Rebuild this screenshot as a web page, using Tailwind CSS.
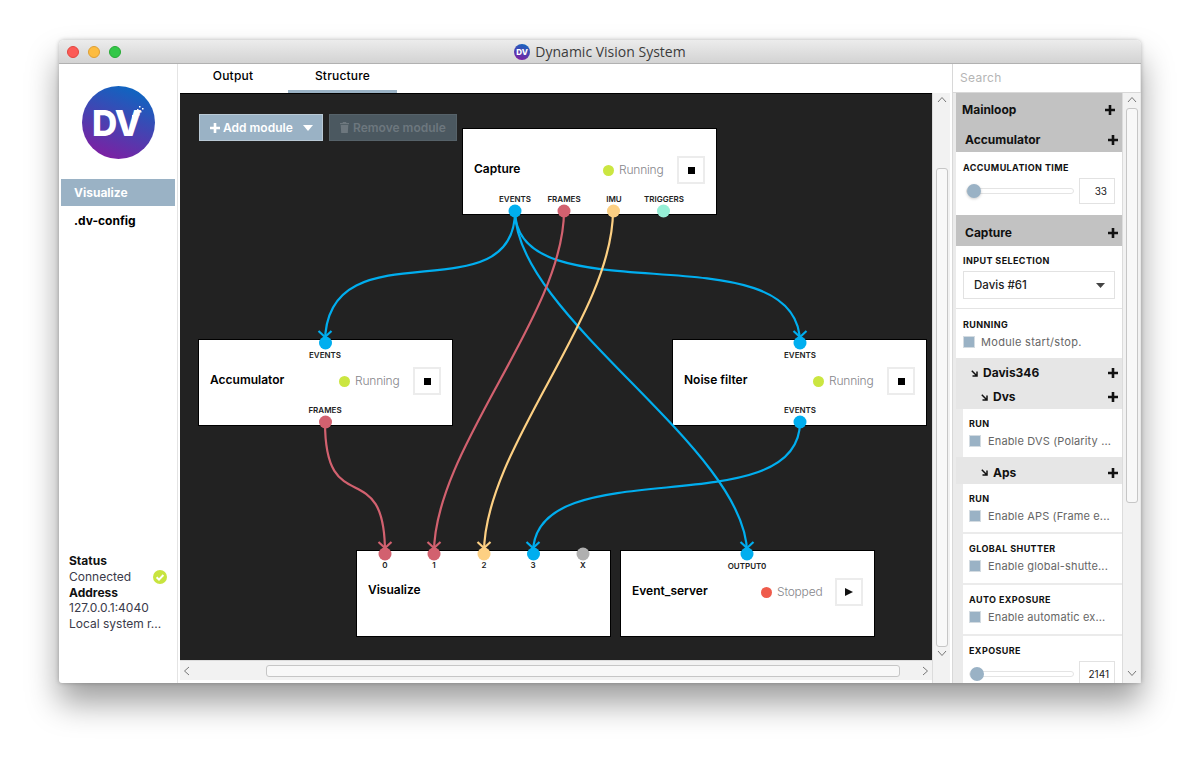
<!DOCTYPE html>
<html lang="en">
  <head>
    <meta charset="UTF-8" />
    <meta name="viewport" content="width=device-width, initial-scale=1.0" />
    <title>Dynamic Vision System</title>
    <script src="https://cdn.jsdelivr.net/npm/@tailwindcss/browser@4"></script>
  </head>
  <body class="bg-white">
    <div class="w-[1200px] h-[761px] overflow-hidden pt-[40px] pl-[59px] font-[Inter,sans-serif] text-black">
      <div class="w-[1082px] h-[643px] flex flex-col rounded-t-[5px] rounded-b-[3px] bg-white shadow-[0_20px_32px_rgba(0,0,0,0.38),0_0_4px_rgba(0,0,0,0.25)]">
        <!-- title bar -->
        <div class="relative h-[24px] shrink-0 flex items-center justify-center gap-[5px] rounded-t-[5px] bg-gradient-to-b from-[#ececec] to-[#d3d3d3] border-b border-[#b1b1b1]">
          <div class="absolute left-[8px] top-[6px] flex gap-[9px]">
            <span class="w-[12px] h-[12px] rounded-full bg-[#fc5b57] border border-[#e2463f]"></span>
            <span class="w-[12px] h-[12px] rounded-full bg-[#fdbc40] border border-[#de9f34]"></span>
            <span class="w-[12px] h-[12px] rounded-full bg-[#33c748] border border-[#27aa35]"></span>
          </div>
          <svg width="16" height="16" viewBox="0 0 16 16">
            <defs>
              <linearGradient id="tlogo" x1="0.7" y1="0" x2="0.35" y2="1">
                <stop offset="0" stop-color="#1467c0" />
                <stop offset="1" stop-color="#7d1fa3" />
              </linearGradient>
            </defs>
            <circle cx="8" cy="8" r="8" fill="url(#tlogo)" />
            <text x="8" y="11" text-anchor="middle" font-size="8" font-weight="800" fill="#fff" font-family="Inter">DV</text>
          </svg>
          <span class="text-[14px] text-[#3c3c3c] font-[Open_Sans,sans-serif]">Dynamic Vision System</span>
        </div>

        <div class="flex-1 flex min-h-0">
          <!-- sidebar -->
          <div class="w-[119px] shrink-0 flex flex-col border-r border-[#e4e4e4] text-[12px] pl-[2px]">
            <svg class="ml-[21px] mt-[22px] shrink-0" width="73" height="73" viewBox="0 0 73 73">
              <defs>
                <linearGradient id="logo" x1="0.72" y1="0" x2="0.32" y2="1">
                  <stop offset="0" stop-color="#0a68c2" />
                  <stop offset="1" stop-color="#7e1fa2" />
                </linearGradient>
              </defs>
              <circle cx="36.5" cy="36.5" r="36.5" fill="url(#logo)" />
              <text x="10" y="50" font-size="35" font-weight="800" fill="#fff" font-family="Inter" letter-spacing="-1">DV</text>
              <g fill="#fff">
                <rect x="57" y="20" width="1.500" height="1.500" /><rect x="60" y="22" width="1.500" height="1.500" /><rect x="55" y="23" width="1.500" height="1.500" />
                <rect x="58" y="25" width="1.500" height="1.500" /><rect x="53" y="26" width="2" height="2" /><rect x="56" y="28" width="1.500" height="1.500" />
                <rect x="50" y="29" width="3" height="3" /><rect x="54" y="31" width="1.500" height="1.500" />
              </g>
            </svg>
            <div class="mt-[20px] h-[27px] w-[114px] flex items-center pl-[13px] bg-[#9ab2c5] text-white font-bold">Visualize</div>
            <div class="mt-[7px] h-[15px] flex items-center pl-[13px] font-bold">.dv-config</div>
            <div class="mt-auto mb-[51px] pl-[8px] pr-[7px] leading-[15.8px] text-[#3a3a4a]">
              <div class="font-bold text-[#111]">Status</div>
              <div class="flex items-center justify-between pr-[3px]">
                <span>Connected</span>
                <svg width="14" height="14" viewBox="0 0 14 14"><circle cx="7" cy="7" r="7" fill="#c8e43f" /><path d="M3.6 7.2l2.4 2.4 4.4-4.6" fill="none" stroke="#fff" stroke-width="2" /></svg>
              </div>
              <div class="font-bold text-[#111]">Address</div>
              <div>127.0.0.1:4040</div>
              <div class="whitespace-nowrap">Local system r...</div>
            </div>
          </div>

          <!-- center -->
          <div class="w-[774px] shrink-0 flex flex-col">
            <div class="h-[29px] shrink-0 flex text-[12px] font-medium tracking-[0.2px]">
              <div class="w-[110px] h-full flex justify-center pt-[3px]">Output</div>
              <div class="w-[109px] h-full flex justify-center pt-[3px] border-b-[3px] border-[#9ab2c5]">Structure</div>
            </div>
            <div class="flex-1 flex min-h-0 pl-[2px]">
              <div class="w-[752px] flex flex-col">
                <!-- canvas -->
                <div class="relative h-[567px] shrink-0 bg-[#222222] overflow-hidden border-t border-black">
                  <div class="absolute left-[19px] top-[20px] w-[124px] h-[27px] flex items-center pl-[10px] gap-[3px] bg-[#9ab2c5] border border-[#b9c9d5] text-white text-[12px] font-semibold">
                    <svg width="10" height="10" viewBox="0 0 10 10"><path d="M3.7 0h2.600v3.700H10v2.600H6.300V10H3.700V6.300H0V3.700h3.700z" fill="#fff" /></svg>
                    <span>Add module</span>
                    <svg class="ml-[7px]" width="10" height="6" viewBox="0 0 10 6"><path d="M0 0h10L5 6z" fill="#fff" /></svg>
                  </div>
                  <div class="absolute left-[149px] top-[20px] w-[128px] h-[27px] flex items-center pl-[10px] gap-[4px] bg-[#4b5860] border border-[#566269] text-[#6d777e] text-[12px] font-semibold">
                    <svg width="9" height="11" viewBox="0 0 9 11"><path d="M3 0h3l.5 1H9v1.200H0V1h2.500zM.7 3h7.600l-.5 8H1.200z" fill="#6d777e" /></svg>
                    <span>Remove module</span>
                  </div>

                  <!-- Capture -->
                  <div class="absolute left-[282px] top-[34px] w-[255px] h-[87px] bg-white border border-black px-[11px] pt-[27px]">
                    <div class="flex items-center h-[28px]">
                      <span class="text-[12px] font-semibold flex-1 pb-[2px]">Capture</span>
                      <span class="w-[11px] h-[11px] rounded-full bg-[#cbe641]"></span>
                      <span class="ml-[5px] w-[58px] text-[12px] font-light tracking-[-0.2px] text-[#85858a]">Running</span>
                      <span class="w-[28px] h-[28px] flex items-center justify-center border-2 border-[#ececec] bg-white"><span class="w-[7px] h-[7px] bg-black"></span></span>
                    </div>
                    <span class="absolute left-[52px] top-[64px] -translate-x-1/2 text-[8px] font-semibold text-[#222]">EVENTS</span>
                    <span class="absolute left-[101px] top-[64px] -translate-x-1/2 text-[8px] font-semibold text-[#222]">FRAMES</span>
                    <span class="absolute left-[151px] top-[64px] -translate-x-1/2 text-[8px] font-semibold text-[#222]">IMU</span>
                    <span class="absolute left-[201px] top-[64px] -translate-x-1/2 text-[8px] font-semibold text-[#222] whitespace-nowrap">TRIGGERS</span>
                  </div>

                  <!-- Accumulator -->
                  <div class="absolute left-[18px] top-[245px] w-[255px] h-[87px] bg-white border border-black px-[11px] pt-[27px]">
                    <div class="flex items-center h-[28px]">
                      <span class="text-[12px] font-semibold flex-1 pb-[2px]">Accumulator</span>
                      <span class="w-[11px] h-[11px] rounded-full bg-[#cbe641]"></span>
                      <span class="ml-[5px] w-[58px] text-[12px] font-light tracking-[-0.2px] text-[#85858a]">Running</span>
                      <span class="w-[28px] h-[28px] flex items-center justify-center border-2 border-[#ececec] bg-white"><span class="w-[7px] h-[7px] bg-black"></span></span>
                    </div>
                    <span class="absolute left-[126px] top-[9px] -translate-x-1/2 text-[8px] font-semibold text-[#222]">EVENTS</span>
                    <span class="absolute left-[126px] top-[64px] -translate-x-1/2 text-[8px] font-semibold text-[#222]">FRAMES</span>
                  </div>

                  <!-- Noise filter -->
                  <div class="absolute left-[492px] top-[245px] w-[255px] h-[87px] bg-white border border-black px-[11px] pt-[27px]">
                    <div class="flex items-center h-[28px]">
                      <span class="text-[12px] font-semibold flex-1 pb-[2px]">Noise filter</span>
                      <span class="w-[11px] h-[11px] rounded-full bg-[#cbe641]"></span>
                      <span class="ml-[5px] w-[58px] text-[12px] font-light tracking-[-0.2px] text-[#85858a]">Running</span>
                      <span class="w-[28px] h-[28px] flex items-center justify-center border-2 border-[#ececec] bg-white"><span class="w-[7px] h-[7px] bg-black"></span></span>
                    </div>
                    <span class="absolute left-[127px] top-[9px] -translate-x-1/2 text-[8px] font-semibold text-[#222]">EVENTS</span>
                    <span class="absolute left-[127px] top-[64px] -translate-x-1/2 text-[8px] font-semibold text-[#222]">EVENTS</span>
                  </div>

                  <!-- Visualize -->
                  <div class="absolute left-[176px] top-[456px] w-[255px] h-[87px] bg-white border border-black px-[11px] pt-[27px]">
                    <div class="flex items-center h-[24px]">
                      <span class="text-[12px] font-semibold flex-1">Visualize</span>
                    </div>
                    <span class="absolute left-[28px] top-[8px] -translate-x-1/2 text-[8px] font-semibold text-[#222]">0</span>
                    <span class="absolute left-[77px] top-[8px] -translate-x-1/2 text-[8px] font-semibold text-[#222]">1</span>
                    <span class="absolute left-[127px] top-[8px] -translate-x-1/2 text-[8px] font-semibold text-[#222]">2</span>
                    <span class="absolute left-[176px] top-[8px] -translate-x-1/2 text-[8px] font-semibold text-[#222]">3</span>
                    <span class="absolute left-[226px] top-[8px] -translate-x-1/2 text-[8px] font-semibold text-[#222]">X</span>
                  </div>

                  <!-- Event_server -->
                  <div class="absolute left-[440px] top-[456px] w-[255px] h-[87px] bg-white border border-black px-[11px] pt-[27px]">
                    <div class="flex items-center h-[28px]">
                      <span class="text-[12px] font-semibold flex-1 pb-[2px]">Event_server</span>
                      <span class="w-[11px] h-[11px] rounded-full bg-[#ef5b4b]"></span>
                      <span class="ml-[5px] w-[58px] text-[12px] font-light tracking-[-0.2px] text-[#85858a]">Stopped</span>
                      <span class="w-[28px] h-[28px] flex items-center justify-center border-2 border-[#ececec] bg-white">
                        <svg width="8" height="8" viewBox="0 0 8 8"><path d="M0 0l8 4-8 4z" fill="#111" /></svg>
                      </span>
                    </div>
                    <span class="absolute left-[126px] top-[9px] -translate-x-1/2 text-[8px] font-semibold text-[#222]">OUTPUT0</span>
                  </div>

                  <!-- connections, in window coordinates -->
                  <svg class="absolute left-0 top-0" width="752" height="566" viewBox="180 94 752 566" fill="none" stroke-width="2.200">
                    <g stroke="#00aeef">
                      <path d="M515 211C515 318 325 222 325 343" />
                      <path d="M515 211C515 319 800 227 800 343" />
                      <path d="M515 211C515 316 747 448 747 553" />
                      <path d="M800 422C800 527 533 448 533 553" />
                      <path d="M318.500 331L325 337L331.500 331M740.500 542L747 548L753.500 542M526.500 542L533 548L539.500 542M793.500 331L800 337L806.500 331" />
                    </g>
                    <g stroke="#d2616f">
                      <path d="M564 211C564 315 434 449 434 553" />
                      <path d="M325 422C325 523 385 452 385 553" />
                      <path d="M378.500 542L385 548L391.500 542M427.500 542L434 548L440.500 542" />
                    </g>
                    <g stroke="#fdd083">
                      <path d="M613 211C613 315 484 449 484 553" />
                      <path d="M477.500 542L484 548L490.500 542" />
                    </g>
                    <g stroke="none">
                      <circle cx="515" cy="211" r="6.500" fill="#00aeef" />
                      <circle cx="564" cy="211" r="6.500" fill="#d2616f" />
                      <circle cx="613.500" cy="211" r="6.500" fill="#fdd083" />
                      <circle cx="663.500" cy="211" r="6.500" fill="#96efd6" />
                      <circle cx="325.500" cy="343" r="6.500" fill="#00aeef" />
                      <circle cx="325.500" cy="422" r="6.500" fill="#d2616f" />
                      <circle cx="800" cy="343" r="6.500" fill="#00aeef" />
                      <circle cx="800" cy="422" r="6.500" fill="#00aeef" />
                      <circle cx="385" cy="554" r="6.500" fill="#d2616f" />
                      <circle cx="434" cy="554" r="6.500" fill="#d2616f" />
                      <circle cx="484" cy="554" r="6.500" fill="#fdd083" />
                      <circle cx="533.500" cy="554" r="6.500" fill="#00aeef" />
                      <circle cx="583" cy="554" r="6.500" fill="#b0b0b0" />
                      <circle cx="747" cy="554" r="6.500" fill="#00aeef" />
                    </g>
                  </svg>
                </div>
                <!-- horizontal scrollbar -->
                <div class="h-[20px] flex items-center bg-[#f2f2f2] border-t border-[#dcdcdc]">
                  <svg class="ml-[3px]" width="7" height="10" viewBox="0 0 7 10"><path d="M6 1L1.500 5L6 9" fill="none" stroke="#777" /></svg>
                  <div class="ml-[76px] w-[634px] h-[12px] rounded-[3px] bg-[#f8f8f8] border border-[#c6c6c6]"></div>
                  <svg class="ml-[22px]" width="7" height="10" viewBox="0 0 7 10"><path d="M1 1L5.500 5L1 9" fill="none" stroke="#777" /></svg>
                </div>
              </div>
              <!-- vertical scrollbar -->
              <div class="w-[18px] flex flex-col items-center bg-[#f2f2f2] border-l border-[#dcdcdc]">
                <svg class="mt-[3px]" width="10" height="7" viewBox="0 0 10 7"><path d="M1 6L5 1.500L9 6" fill="none" stroke="#777" /></svg>
                <div class="mt-[65px] w-[12px] h-[479px] rounded-[3px] bg-[#f8f8f8] border border-[#c6c6c6]"></div>
                <svg class="mt-[3px]" width="10" height="7" viewBox="0 0 10 7"><path d="M1 1L5 5.500L9 1" fill="none" stroke="#777" /></svg>
              </div>
            </div>
          </div>

          <!-- right panel -->
          <div class="flex-1 flex flex-col min-w-0 bg-[#e9e9e9] border-l border-[#d8d8d8]">
            <div class="h-[28px] shrink-0 flex items-center pl-[7px] mr-[1px] bg-white text-[12px] text-[#b5b5b5] tracking-[0.3px]">Search</div>
            <div class="flex-1 flex min-h-0 border-t border-[#d8d8d8]">
              <div class="w-[169px] shrink-0 overflow-hidden pl-[3px] bg-[#ebebeb]">
                <div class="bg-[#c2c2c2] text-[12px] font-bold text-[#111]">
                  <div class="h-[30px] pt-[4px] flex items-center justify-between pl-[6px] pr-[7px]">
                    <span>Mainloop</span>
                    <svg width="10" height="10" viewBox="0 0 10 10"><path d="M3.700 0h2.600v3.700H10v2.600H6.300V10H3.700V6.300H0V3.700h3.700z" fill="#111" /></svg>
                  </div>
                  <div class="h-[29px] pt-[5px] flex items-center justify-between pl-[9px] pr-[4px]">
                    <span>Accumulator</span>
                    <svg width="10" height="10" viewBox="0 0 10 10"><path d="M3.700 0h2.600v3.700H10v2.600H6.300V10H3.700V6.300H0V3.700h3.700z" fill="#111" /></svg>
                  </div>
                </div>
                <div class="h-[63px] bg-white px-[7px] pt-[10px]">
                  <div class="text-[9px] font-bold leading-[12px] tracking-[0.4px] text-[#111]">ACCUMULATION TIME</div>
                  <div class="flex items-center mt-[4px]">
                    <div class="relative flex-1 h-[6px] ml-[3px] mr-[5px] rounded-full border border-[#e4e4e4] bg-white">
                      <span class="absolute left-0 -top-[5px] w-[14px] h-[14px] rounded-full bg-[#9ab2c5] shadow-[0_1px_3px_rgba(0,0,0,0.2)]"></span>
                    </div>
                    <div class="w-[36px] h-[26px] flex items-center justify-end pr-[7px] border border-[#e2e2e2] text-[10px] text-[#222]">33</div>
                  </div>
                </div>
                <div class="bg-[#c2c2c2] h-[31px] pt-[5px] flex items-center justify-between pl-[9px] pr-[4px] text-[12px] font-bold text-[#111]">
                  <span>Capture</span>
                  <svg width="10" height="10" viewBox="0 0 10 10"><path d="M3.700 0h2.600v3.700H10v2.600H6.300V10H3.700V6.300H0V3.700h3.700z" fill="#111" /></svg>
                </div>
                <div class="h-[63px] bg-white px-[7px] pt-[9px] border-b border-[#e4e4e4]">
                  <div class="text-[9px] font-bold leading-[12px] tracking-[0.4px] text-[#111]">INPUT SELECTION</div>
                  <div class="mt-[4px] h-[28px] flex items-center justify-between pl-[10px] pr-[9px] pt-[1px] border border-[#e2e2e2] text-[11.500px] font-medium text-[#222]">
                    <span>Davis #61</span>
                    <svg width="9" height="5" viewBox="0 0 9 5"><path d="M0 0h9L4.500 5z" fill="#444" /></svg>
                  </div>
                </div>
                <div class="h-[49px] bg-white px-[7px] pt-[10px]">
                  <div class="text-[9px] font-bold leading-[12px] tracking-[0.4px] text-[#111]">RUNNING</div>
                  <div class="flex items-center gap-[6px] mt-[3px] text-[11px] tracking-[0.3px] text-[#666]">
                    <span class="w-[12px] h-[12px] bg-[#9ab2c5] border border-[#d3dbe1]"></span>
                    <span class="whitespace-nowrap">Module start/stop.</span>
                  </div>
                </div>
                <div class="h-[25px] pt-[5px] flex items-center justify-between pl-[15px] pr-[4px] bg-[#e6e6e6] text-[12px] font-bold text-[#111]">
                  <span class="flex items-center gap-[5px]">
                    <svg width="7" height="7" viewBox="0 0 7 7"><path d="M0.800 0.800L5.500 5.500M6 1.500V6H1.500" fill="none" stroke="#111" stroke-width="1.500" /></svg>
                    Davis346
                  </span>
                  <svg width="10" height="10" viewBox="0 0 10 10"><path d="M3.700 0h2.600v3.700H10v2.600H6.300V10H3.700V6.300H0V3.700h3.700z" fill="#111" /></svg>
                </div>
                <div class="h-[26px] pt-[2px] flex items-center justify-between pl-[25px] pr-[4px] bg-[#e6e6e6] text-[12px] font-bold text-[#111]">
                  <span class="flex items-center gap-[5px]">
                    <svg width="7" height="7" viewBox="0 0 7 7"><path d="M0.800 0.800L5.500 5.500M6 1.500V6H1.500" fill="none" stroke="#111" stroke-width="1.500" /></svg>
                    Dvs
                  </span>
                  <svg width="10" height="10" viewBox="0 0 10 10"><path d="M3.700 0h2.600v3.700H10v2.600H6.300V10H3.700V6.300H0V3.700h3.700z" fill="#111" /></svg>
                </div>
                <div class="ml-[7px] h-[48px] bg-white pl-[6px] pr-[4px] pt-[9px]">
                  <div class="text-[9px] font-bold leading-[12px] tracking-[0.4px] text-[#111]">RUN</div>
                  <div class="flex items-center gap-[7px] mt-[3px] text-[11px] tracking-[0.15px] text-[#666]">
                    <span class="w-[12px] h-[12px] bg-[#9ab2c5] border border-[#d3dbe1]"></span>
                    <span class="whitespace-nowrap">Enable DVS (Polarity ...</span>
                  </div>
                </div>
                <div class="h-[27px] pt-[4px] flex items-center justify-between pl-[25px] pr-[4px] bg-[#e6e6e6] text-[12px] font-bold text-[#111]">
                  <span class="flex items-center gap-[5px]">
                    <svg width="7" height="7" viewBox="0 0 7 7"><path d="M0.800 0.800L5.500 5.500M6 1.500V6H1.500" fill="none" stroke="#111" stroke-width="1.500" /></svg>
                    Aps
                  </span>
                  <svg width="10" height="10" viewBox="0 0 10 10"><path d="M3.700 0h2.600v3.700H10v2.600H6.300V10H3.700V6.300H0V3.700h3.700z" fill="#111" /></svg>
                </div>
                <div class="ml-[7px] flex flex-col gap-[2px]">
                  <div class="h-[48px] bg-white pl-[6px] pr-[4px] pt-[9px]">
                    <div class="text-[9px] font-bold leading-[12px] tracking-[0.4px] text-[#111]">RUN</div>
                    <div class="flex items-center gap-[7px] mt-[3px] text-[11px] tracking-[0.15px] text-[#666]">
                      <span class="w-[12px] h-[12px] bg-[#9ab2c5] border border-[#d3dbe1]"></span>
                      <span class="whitespace-nowrap">Enable APS (Frame e...</span>
                    </div>
                  </div>
                  <div class="h-[49px] bg-white pl-[6px] pr-[4px] pt-[9px]">
                    <div class="text-[9px] font-bold leading-[12px] tracking-[0.4px] text-[#111]">GLOBAL SHUTTER</div>
                    <div class="flex items-center gap-[7px] mt-[3px] text-[11px] tracking-[0.15px] text-[#666]">
                      <span class="w-[12px] h-[12px] bg-[#9ab2c5] border border-[#d3dbe1]"></span>
                      <span class="whitespace-nowrap">Enable global-shutte...</span>
                    </div>
                  </div>
                  <div class="h-[49px] bg-white pl-[6px] pr-[4px] pt-[9px]">
                    <div class="text-[9px] font-bold leading-[12px] tracking-[0.4px] text-[#111]">AUTO EXPOSURE</div>
                    <div class="flex items-center gap-[7px] mt-[3px] text-[11px] tracking-[0.15px] text-[#666]">
                      <span class="w-[12px] h-[12px] bg-[#9ab2c5] border border-[#d3dbe1]"></span>
                      <span class="whitespace-nowrap">Enable automatic ex...</span>
                    </div>
                  </div>
                  <div class="h-[60px] bg-white pl-[6px] pr-[7px] pt-[9px]">
                    <div class="text-[9px] font-bold leading-[12px] tracking-[0.4px] text-[#111]">EXPOSURE</div>
                    <div class="flex items-center mt-[4px]">
                      <div class="relative flex-1 h-[6px] mr-[5px] rounded-full border border-[#e4e4e4] bg-white">
                        <span class="absolute left-0 -top-[5px] w-[14px] h-[14px] rounded-full bg-[#9ab2c5]"></span>
                      </div>
                      <div class="w-[36px] h-[26px] flex items-center justify-end pr-[5px] border border-[#e2e2e2] text-[10px] text-[#222]">2141</div>
                    </div>
                  </div>
                </div>
              </div>
              <!-- panel scrollbar -->
              <div class="w-[18px] flex flex-col items-center bg-[#f2f2f2] border-l border-[#dcdcdc]">
                <svg class="mt-[3px]" width="10" height="7" viewBox="0 0 10 7"><path d="M1 6L5 1.500L9 6" fill="none" stroke="#777" /></svg>
                <div class="mt-[5px] w-[12px] h-[395px] rounded-[3px] bg-[#f8f8f8] border border-[#c6c6c6]"></div>
                <svg class="mt-auto mb-[6px]" width="10" height="7" viewBox="0 0 10 7"><path d="M1 1L5 5.500L9 1" fill="none" stroke="#777" /></svg>
              </div>
            </div>
          </div>
        </div>
      </div>
    </div>
  </body>
</html>
